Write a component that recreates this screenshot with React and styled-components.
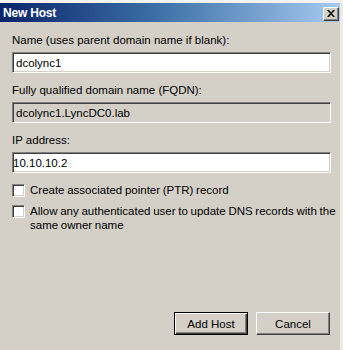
import React, { useState } from 'react'
import styled, { createGlobalStyle } from 'styled-components'

const GlobalStyle = createGlobalStyle`
  html, body {
    margin: 0;
    padding: 0;
    background: #ffffff;
  }
  body {
    font-family: "Liberation Sans", Arial, sans-serif;
    font-size: 11.5px;
  }
`

const Frame = styled.div`
  width: 343px;
  height: 350px;
  box-sizing: border-box;
  display: flex;
  flex-direction: column;
  background: #d4d0c8;
  border-top: 3px solid #f4f3ef;
  border-right: 3px solid #ecebe6;
`

const TitleBar = styled.div`
  display: flex;
  align-items: center;
  justify-content: space-between;
  height: 19px;
  padding: 0 1px 0 3px;
  background: linear-gradient(90deg, #0a246a 0%, #3a6ea5 45%, #a6caf0 100%);
`

const Title = styled.span`
  color: #ffffff;
  font-weight: bold;
  font-size: 12px;
  font-family: "Liberation Sans", Arial, sans-serif;
  letter-spacing: -0.2px;
`

const CloseButton = styled.button`
  width: 16px;
  height: 14px;
  padding: 0;
  margin-top: 2px;
  display: flex;
  align-items: center;
  justify-content: center;
  background: #d4d0c8;
  border: 1px solid;
  border-color: #ffffff #404040 #404040 #ffffff;
  box-shadow: inset -1px -1px 0 #808080;
`

const Body = styled.div`
  flex: 1;
  display: flex;
  flex-direction: column;
  padding: 11px 9px 15px 12px;
`

const Label = styled.div`
  color: #000000;
  line-height: 14px;
  font-family: "Liberation Sans", Arial, sans-serif;
  font-size: 11.5px;
`

const Field = styled.input`
  box-sizing: border-box;
  width: 100%;
  height: 21px;
  margin: 5px 0 10px;
  padding: 0 0 0 ${(p) => (p.$flush ? '0' : '3px')};
  font-family: "Liberation Sans", Arial, sans-serif;
  font-size: 11.5px;
  color: #000000;
  background: ${(p) => (p.readOnly ? '#d4d0c8' : '#ffffff')};
  border: 1px solid;
  border-color: #808080 #ffffff #ffffff #808080;
  box-shadow: inset 1px 1px 0 #404040, inset -1px -1px 0 #d4d0c8;
  outline: none;
`

const CheckRow = styled.label`
  display: flex;
  align-items: flex-start;
  gap: 5px;
  margin: 0 -6px ${(p) => p.$gap}px 0;
  font-family: "Liberation Sans", Arial, sans-serif;
  font-size: 11.5px;
  line-height: 14px;
  word-spacing: -0.5px;
  color: #000000;
`

const Box = styled.span`
  flex: none;
  box-sizing: border-box;
  width: 13px;
  height: 13px;
  margin-top: 1px;
  background: #ffffff;
  border: 1px solid;
  border-color: #808080 #ffffff #ffffff #808080;
  box-shadow: inset 1px 1px 0 #404040, inset -1px -1px 0 #d4d0c8;
`

const ButtonRow = styled.div`
  margin-top: auto;
  display: flex;
  justify-content: flex-end;
  gap: 8px;
  padding-right: 1px;
`

const Button = styled.button`
  box-sizing: border-box;
  width: ${(p) => p.$w}px;
  height: 23px;
  padding: 0;
  font-family: "Liberation Sans", Arial, sans-serif;
  font-size: 11.5px;
  color: #000000;
  background: #d4d0c8;
  border: 1px solid;
  border-color: ${(p) =>
    p.$default ? '#000000' : '#ffffff #404040 #404040 #ffffff'};
  box-shadow: ${(p) =>
    p.$default
      ? 'inset 1px 1px 0 #ffffff, inset -1px -1px 0 #404040, inset -2px -2px 0 #808080'
      : 'inset -1px -1px 0 #808080'};
`

const Checkbox = ({ children, gap }) => (
  <CheckRow $gap={gap}>
    <Box />
    <span>{children}</span>
  </CheckRow>
)

const App = () => {
  const [name, setName] = useState('dcolync1')
  const [ip, setIp] = useState('10.10.10.2')

  return (
    <>
      <GlobalStyle />
      <Frame>
        <TitleBar>
          <Title>New Host</Title>
          <CloseButton>
            <svg width="8" height="7" viewBox="0 0 8 7">
              <path d="M0 0h2l2 2.5L6 0h2L5 3.5 8 7H6L4 4.5 2 7H0l3-3.5z" fill="#000" />
            </svg>
          </CloseButton>
        </TitleBar>
        <Body>
          <Label>Name (uses parent domain name if blank):</Label>
          <Field value={name} onChange={(e) => setName(e.target.value)} />
          <Label>Fully qualified domain name (FQDN):</Label>
          <Field value={`${name}.LyncDC0.lab`} readOnly />
          <Label>IP address:</Label>
          <Field $flush value={ip} onChange={(e) => setIp(e.target.value)} />
          <Checkbox gap={7}>Create associated pointer (PTR) record</Checkbox>
          <Checkbox gap={0}>
            Allow any authenticated user to update DNS records with the same
            owner name
          </Checkbox>
          <ButtonRow>
            <Button $w={74} $default>Add Host</Button>
            <Button $w={74}>Cancel</Button>
          </ButtonRow>
        </Body>
      </Frame>
    </>
  )
}

export default App
